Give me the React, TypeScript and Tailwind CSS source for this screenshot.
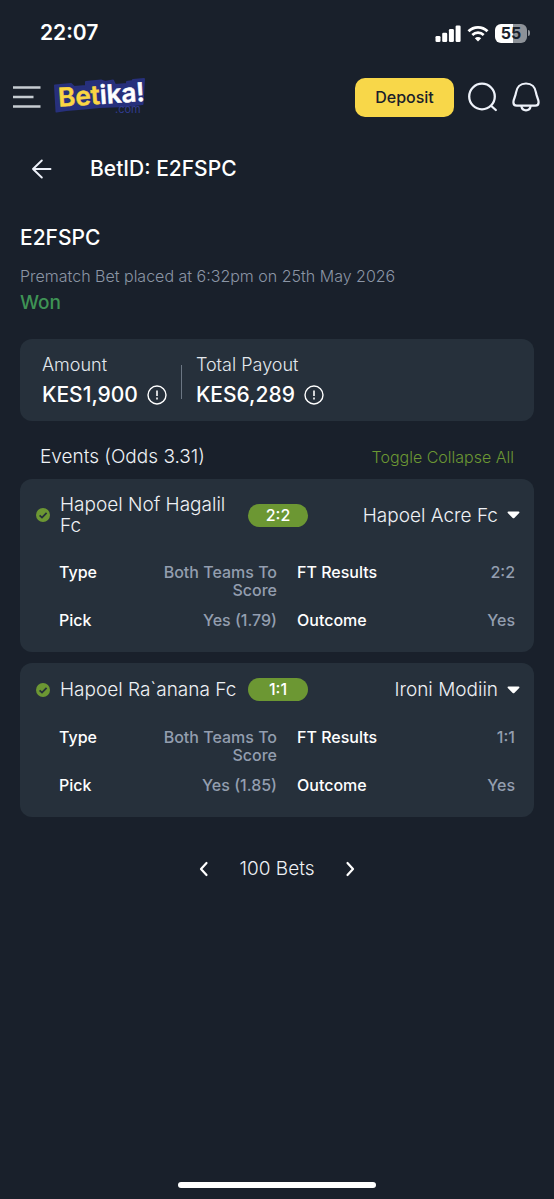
import { useState } from "react";

type BetEvent = {
  id: number;
  home: string;
  away: string;
  score: string;
  type: string;
  pick: string;
  outcome: string;
};

const events: BetEvent[] = [
  {
    id: 1,
    home: "Hapoel Nof Hagalil Fc",
    away: "Hapoel Acre Fc",
    score: "2:2",
    type: "Both Teams To Score",
    pick: "Yes (1.79)",
    outcome: "Yes",
  },
  {
    id: 2,
    home: "Hapoel Ra`anana Fc",
    away: "Ironi Modiin",
    score: "1:1",
    type: "Both Teams To Score",
    pick: "Yes (1.85)",
    outcome: "Yes",
  },
];

const StatusBar = () => (
  <div className="flex h-[66px] items-center justify-between pr-6 pl-10">
    <span className="text-[21px] font-semibold">22:07</span>
    <div className="flex items-center gap-[6px]">
      <svg width="26" height="17" viewBox="0 0 26 17" fill="#fff" aria-hidden="true">
        <rect x="0.5" y="11" width="5" height="6" rx="1.3" />
        <rect x="7.2" y="7.8" width="5" height="9.2" rx="1.3" />
        <rect x="13.9" y="4" width="5" height="13" rx="1.3" />
        <rect x="20.6" y="0.5" width="5" height="16.5" rx="1.3" />
      </svg>
      <svg width="22" height="17" viewBox="0 0 22 17" fill="none" aria-hidden="true">
        <path d="M1.5 6.2a13.5 13.5 0 0 1 19 0" stroke="#fff" strokeWidth="2.8" />
        <path d="M5.3 10a8.1 8.1 0 0 1 11.4 0" stroke="#fff" strokeWidth="2.6" />
        <path d="M11 16.6 7.8 13.3a4.5 4.5 0 0 1 6.4 0z" fill="#fff" />
      </svg>
      <div className="flex items-center gap-px">
        <span className="flex h-[19px] w-8 items-center justify-center rounded-md bg-linear-to-r from-white from-55% to-[#8d9298] to-55% text-base font-bold text-[#19202b]">
          55
        </span>
        <span className="h-[6px] w-[2px] rounded-r-full bg-[#8d9298]" />
      </div>
    </div>
  </div>
);

const Logo = () => (
  <svg
    width="96"
    height="42"
    viewBox="0 0 96 42"
    className="overflow-visible"
    role="img"
    aria-label="Betika.com"
  >
    <path
      d="M2 9.500 18 8l3 3 12-1V6l15-1.500 4 1.500 8-1.500 2 4.500 12-1V6l6-1V4l11-1-1.500 25-17 2-26 1-15 1.500-18 1.500-10 1.500z"
      fill="#27307c"
      stroke="#27307c"
      strokeWidth="2"
      strokeLinejoin="round"
    />
    <g
      transform="rotate(-4 46 18)"
      fontFamily="Inter, sans-serif"
      fontSize="26"
      fontWeight="600"
      strokeWidth="0.5"
      strokeLinejoin="round"
    >
      <text x="5" y="28">
        <tspan fill="#fbd643" stroke="#fbd643">Bet</tspan>
        <tspan fill="#fff" stroke="#fff">ika!</tspan>
      </text>
    </g>
    <text x="62" y="37" fontFamily="Inter, sans-serif" fontSize="11" fill="#303b8f">
      .com
    </text>
  </svg>
);

const Header = () => (
  <header className="flex h-[62px] items-center pr-[14px] pl-[13px]">
    <button type="button" aria-label="Menu" className="mr-3">
      <svg width="28" height="22" viewBox="0 0 28 22" stroke="#c6ccd2" strokeWidth="2.4">
        <path d="M0 1.500h27.500M0 11h20.500M0 20.500h27.500" />
      </svg>
    </button>
    <a href="#home">
      <Logo />
    </a>
    <div className="ml-auto flex items-center gap-[14px]">
      <button
        type="button"
        className="h-[39px] w-[99px] rounded-[10px] bg-[#f8d749] text-base font-medium text-[#19202b]"
      >
        Deposit
      </button>
      <button type="button" aria-label="Search">
        <svg width="30" height="30" viewBox="0 0 30 30" fill="none" stroke="#eef2fa" strokeWidth="2.300" strokeLinecap="round">
          <circle cx="14" cy="14.500" r="12.800" />
          <path d="m23.300 24 4.500 4" />
        </svg>
      </button>
      <button type="button" aria-label="Notifications">
        <svg width="28" height="30" viewBox="0 0 28 30" fill="none" stroke="#eef2fa" strokeWidth="2.200" strokeLinejoin="round">
          <path d="M14 1.500c5.700 0 9.300 3.900 10 9.200.5 3.800 2.600 6.500 2.600 9.600 0 2.300-1.400 3.400-3.300 3.400H4.700c-1.900 0-3.300-1.100-3.300-3.400 0-3.100 2.100-5.800 2.600-9.600.7-5.300 4.300-9.200 10-9.200z" />
          <path d="M9.300 24c.5 2.700 2.200 4.300 4.700 4.300s4.200-1.600 4.700-4.300" />
        </svg>
      </button>
    </div>
  </header>
);

const Amount = ({ label, value }: { label: string; value: string }) => (
  <div>
    <p className="text-lg leading-6 font-light text-[#e3e8ee]">{label}</p>
    <div className="mt-0.5 flex items-center gap-[9px]">
      <span className="text-[21px] leading-8 font-medium">{value}</span>
      <button type="button" aria-label={`About ${label}`}>
        <svg width="20" height="20" viewBox="0 0 20 20" fill="none" stroke="#fff" strokeWidth="1.400" className="block">
          <circle cx="10" cy="10" r="9" />
          <path d="M10 5.500v5.500" strokeWidth="1.600" />
          <path d="M10 12.600v1.800" strokeWidth="1.600" />
        </svg>
      </button>
    </div>
  </div>
);

const Detail = ({ label, value }: { label: string; value: string }) => (
  <div className="flex justify-between gap-4">
    <dt className="shrink-0 text-white">{label}</dt>
    <dd className="max-w-32 text-right text-[#939eaf]">{value}</dd>
  </div>
);

const EventCard = ({
  event,
  open,
  onToggle,
}: {
  event: BetEvent;
  open: boolean;
  onToggle: () => void;
}) => (
  <li className="rounded-xl bg-[#26303b] pt-[15px] pb-[23px]">
    <button
      type="button"
      aria-expanded={open}
      onClick={onToggle}
      className="flex w-full items-center gap-1 pr-[14px] pl-4 text-[19px] leading-[21px] font-light text-[#eef1f5]"
    >
      <span className="flex flex-1 items-center gap-[10px] text-left">
        <svg width="14" height="14" viewBox="0 0 14 14" className="shrink-0" aria-hidden="true">
          <circle cx="7" cy="7" r="7" fill="#6c9733" />
          <path d="m3.600 7.300 2.400 2.300 4.600-4.800" fill="none" stroke="#26303b" strokeWidth="1.800" />
        </svg>
        {event.home}
      </span>
      <span className="h-[23px] w-[60px] rounded-full bg-[#6c9733] text-center text-base leading-[23px] font-medium text-white">
        {event.score}
      </span>
      <span className="flex flex-1 items-center justify-end gap-[9px]">
        {event.away}
        <svg width="13" height="8" viewBox="0 0 13 8" fill="#fff" aria-hidden="true">
          <path d="M1.500.5h10c.9 0 1.300.9.700 1.500L7.300 7a1.200 1.200 0 0 1-1.600 0L.8 2C.2 1.400.6.5 1.500.5z" />
        </svg>
      </span>
    </button>
    {open && (
      <dl className="mt-[27px] grid grid-cols-2 gap-x-5 gap-y-3 pr-[19px] pl-[39px] text-base leading-[18px] font-medium">
        <Detail label="Type" value={event.type} />
        <Detail label="FT Results" value={event.score} />
        <Detail label="Pick" value={event.pick} />
        <Detail label="Outcome" value={event.outcome} />
      </dl>
    )}
  </li>
);

const Chevron = ({ d }: { d: string }) => (
  <svg width="10" height="16" viewBox="0 0 10 16" fill="none" stroke="#fff" strokeWidth="2.200" strokeLinecap="round" strokeLinejoin="round">
    <path d={d} />
  </svg>
);

const App = () => {
  const [openIds, setOpenIds] = useState<number[]>(events.map((e) => e.id));

  const toggle = (id: number) =>
    setOpenIds((ids) =>
      ids.includes(id) ? ids.filter((i) => i !== id) : [...ids, id],
    );

  const toggleAll = () =>
    setOpenIds((ids) => (ids.length ? [] : events.map((e) => e.id)));

  return (
    <div className="flex min-h-screen flex-col bg-[#19202b] font-['Inter',sans-serif] text-white">
      <StatusBar />
      <Header />

      <main className="flex-1 px-5">
        <div className="mt-[25px] flex h-8 items-center gap-[38px] pl-3">
          <button type="button" aria-label="Back">
            <svg width="20" height="20" viewBox="0 0 20 20" fill="none" stroke="#eef2fa" strokeWidth="1.900" strokeLinecap="round" strokeLinejoin="round">
              <path d="M18.500 10H1M9.800 1.500 1 10l8.800 8.500" />
            </svg>
          </button>
          <h1 className="text-[21px] font-medium">BetID: E2FSPC</h1>
        </div>

        <h2 className="mt-[37px] text-[21px] leading-8 font-medium">E2FSPC</h2>
        <p className="mt-[10px] text-base leading-6 font-light text-[#8b95a5]">
          Prematch Bet placed at 6:32pm on 25th May 2026
        </p>
        <p className="mt-px text-[19px] leading-7 font-medium text-[#3f9355]">Won</p>

        <section className="mt-[22px] flex items-center gap-[14px] rounded-xl bg-[#26303b] px-[22px] pt-[14px] pb-[10px]">
          <Amount label="Amount" value="KES1,900" />
          <span className="h-[34px] w-px bg-[#6b7683]" />
          <Amount label="Total Payout" value="KES6,289" />
        </section>

        <div className="flex h-[58px] items-center justify-between px-5 pt-[14px]">
          <h3 className="text-[19px] font-light text-[#eef1f5]">Events (Odds 3.31)</h3>
          <button type="button" onClick={toggleAll} className="text-base font-light text-[#6c9733]">
            Toggle Collapse All
          </button>
        </div>

        <ul className="space-y-[11px]">
          {events.map((event) => (
            <EventCard
              key={event.id}
              event={event}
              open={openIds.includes(event.id)}
              onToggle={() => toggle(event.id)}
            />
          ))}
        </ul>

        <nav className="mt-9 flex h-8 items-center justify-center gap-[31px]">
          <button type="button" aria-label="Previous bet">
            <Chevron d="M7.500 2 2 8l5.500 6" />
          </button>
          <span className="text-[19px] font-light text-[#eef1f5]">100 Bets</span>
          <button type="button" aria-label="Next bet">
            <Chevron d="M2.500 2 8 8l-5.500 6" />
          </button>
        </nav>
      </main>

      <div className="flex justify-center pb-[11px]">
        <span className="h-[6px] w-[198px] rounded-full bg-white" />
      </div>
    </div>
  );
};

export default App;
